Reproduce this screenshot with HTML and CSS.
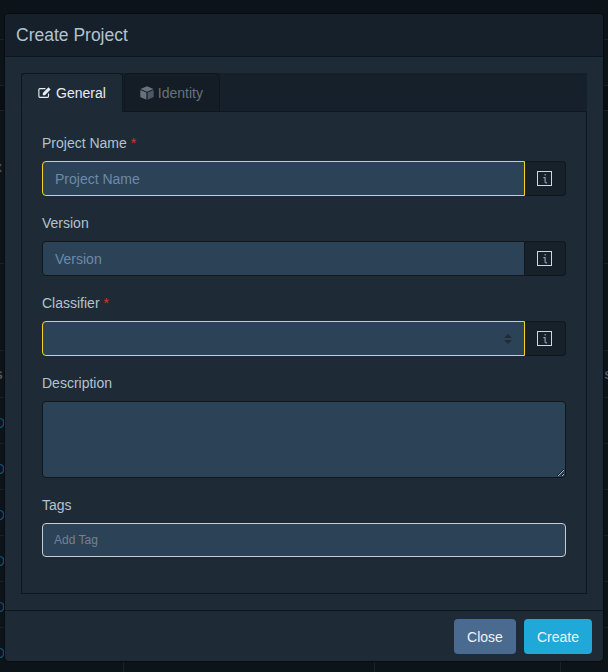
FILE: index.html
```html
<!DOCTYPE html>
<html lang="en">
<head>
<meta charset="utf-8">
<title>Create Project</title>
<link rel="stylesheet" href="styles.css">
</head>
<body>
<div class="page">
  <div class="bg-rows">
    <div class="bg-row r39"></div>
    <div class="bg-row r46"></div>
    <div class="bg-row r25 band"></div>
    <div class="bg-row r153"><span class="bg-x">x</span></div>
    <div class="bg-row r87"></div>
    <div class="bg-row r47"><span class="bg-head">s</span><span class="bg-head">s</span></div>
    <div class="bg-row r46 link-row"><span class="bg-link">D</span></div>
    <div class="bg-row r46 link-row"><span class="bg-link">D</span></div>
    <div class="bg-row r46 link-row"><span class="bg-link">D</span></div>
    <div class="bg-row r46 link-row"><span class="bg-link">D</span></div>
    <div class="bg-row r46 link-row"><span class="bg-link">D</span></div>
    <div class="bg-row cols"><span class="bg-link">D</span><div class="col c123"></div><div class="col c251"></div><div class="col c186"></div></div>
  </div>
  <section class="modal">
    <header class="modal-header"><h1>Create Project</h1></header>
    <div class="modal-body">
      <nav class="tabs">
        <div class="tab active">
          <svg class="tab-icon" viewBox="0 0 16 14"><path d="M8.5 2.5H2.2A1.2 1.2 0 0 0 1 3.7v7.6a1.2 1.2 0 0 0 1.2 1.2h8.6a1.2 1.2 0 0 0 1.2-1.2V8" fill="none" stroke="currentColor" stroke-width="1.3"/><path d="M5.5 7.6 12 1.1l2.4 2.4L7.9 10H5.5z" fill="currentColor"/></svg>
          <span>General</span>
        </div>
        <div class="tab second">
          <svg class="cube-icon" viewBox="0 0 14 14"><path d="M7 .3 13.6 3 7 5.7.4 3z" fill="currentColor"/><path d="M.3 4 6.4 6.6v7.1L.3 11z" fill="currentColor"/><path d="M13.7 4 7.6 6.6v7.1l6.1-2.7z" fill="currentColor" opacity=".7"/></svg>
          <span>Identity</span>
        </div>
      </nav>
      <div class="tab-panel">
        <div class="field">
          <label>Project Name <span class="req">*</span></label>
          <div class="group">
            <input class="control required" placeholder="Project Name">
            <span class="addon"><svg class="info" viewBox="0 0 15 15"><rect x=".5" y=".5" width="14" height="14" fill="none" stroke="currentColor"/><path d="M8.2 3v1.6M6.4 6.6h1.7v4.2q0 1 1 1h1" fill="none" stroke="#8d9cab" stroke-width="1.2"/></svg></span>
          </div>
        </div>
        <div class="field">
          <label>Version</label>
          <div class="group">
            <input class="control" placeholder="Version">
            <span class="addon"><svg class="info" viewBox="0 0 15 15"><rect x=".5" y=".5" width="14" height="14" fill="none" stroke="currentColor"/><path d="M8.2 3v1.6M6.4 6.6h1.7v4.2q0 1 1 1h1" fill="none" stroke="#8d9cab" stroke-width="1.2"/></svg></span>
          </div>
        </div>
        <div class="field">
          <label>Classifier <span class="req">*</span></label>
          <div class="group">
            <div class="control required select">
              <svg class="carets" viewBox="0 0 8 10"><path d="M4 0 8 4H0zM0 6h8L4 10z" fill="currentColor"/></svg>
            </div>
            <span class="addon"><svg class="info" viewBox="0 0 15 15"><rect x=".5" y=".5" width="14" height="14" fill="none" stroke="currentColor"/><path d="M8.2 3v1.6M6.4 6.6h1.7v4.2q0 1 1 1h1" fill="none" stroke="#8d9cab" stroke-width="1.2"/></svg></span>
          </div>
        </div>
        <div class="field">
          <label>Description</label>
          <textarea class="area"></textarea>
        </div>
        <div class="field">
          <label>Tags</label>
          <input class="tags" placeholder="Add Tag">
        </div>
      </div>
    </div>
    <footer class="modal-footer">
      <button class="btn close">Close</button>
      <button class="btn create">Create</button>
    </footer>
  </section>
</div>
</body>
</html>
```
FILE: styles.css
```css
html, body { margin: 0; padding: 0; height: 100%; }
body { background: #0c1319; font-family: "Liberation Sans", Arial, sans-serif; overflow: hidden; }
.page { position: relative; width: 608px; height: 672px; overflow: hidden; }

.bg-row { box-sizing: border-box; border-bottom: 1px solid #1a2229; display: flex; align-items: center; justify-content: space-between; font-size: 14px; text-indent: -5px; }
.r39 { height: 40px; }
.r46 { height: 46px; }
.r47 { height: 47px; }
.r25 { height: 25px; background: #090e13; }
.r153 { height: 153px; align-items: flex-start; padding-top: 48px; }
.r87 { height: 87px; }
.link-row { padding-top: 4px; }
.bg-x { color: #555b61; }
.bg-head { color: #4f555b; font-weight: 700; }
.bg-head + .bg-head { text-indent: 0; margin-right: -4px; }
.bg-link { color: #0e5472; }
.cols { height: 45px; border-bottom: 0; position: relative; align-items: stretch; justify-content: flex-start; }
.cols .bg-link { position: absolute; left: 0; top: 17px; }
.col { box-sizing: border-box; border-right: 1px solid #1a2229; }
.c123 { width: 124px; }
.c251 { width: 251px; }
.c186 { width: 186px; }

.modal {
  position: absolute; left: 5px; top: 14px; width: 598px; height: 647px;
  box-sizing: border-box; display: flex; flex-direction: column;
  background: #1e2b37; border-radius: 4px; box-shadow: 0 0 0 1px #080c10;
}
.modal-header { height: 43px; box-sizing: border-box; background: #15202a; border-bottom: 1px solid #0f161c; padding: 11px 11px 0; border-radius: 4px 4px 0 0; }
.modal-header h1 { margin: 0; font-size: 17.5px; line-height: 21px; font-weight: 400; color: #b4c2d0; }
.modal-body { flex: 1; padding: 16px; display: flex; flex-direction: column; }
.tabs { display: flex; height: 39px; box-sizing: border-box; background: #15202a; border-bottom: 1px solid #0f161c; }
.tab {
  display: flex; align-items: center; gap: 4px; box-sizing: border-box; height: 39px;
  padding: 0 16px; color: #66727e; font-size: 14px;
  border: 1px solid #0f161c; border-radius: 4px 4px 0 0; background: #141d25;
}
.tab.active { background: #1e2b37; color: #e6edf3; border-bottom-color: #1e2b37; margin-right: 1px; }
.tab.second { padding-left: 15px; }
.tab-icon { width: 14px; height: 13px; }
.cube-icon { width: 14px; height: 14px; }
.tab-panel {
  flex: 1; box-sizing: border-box; padding: 21px 20px 0;
  border: 1px solid #0f161c; border-top: 0; display: flex; flex-direction: column; gap: 17px;
}
.field { display: flex; flex-direction: column; gap: 7px; }
.field label { font-size: 14px; line-height: 21px; color: #b4c2d0; height: 21px; }
.req { color: #d9342b; }
.group { display: flex; height: 35px; }
.control {
  flex: 1; min-width: 0; box-sizing: border-box; height: 35px; padding: 0 12px;
  background: #2c4257; border: 1px solid #0f161c;
  border-radius: 4px 0 0 4px; color: #b4c2d0; font: 14px "Liberation Sans", Arial, sans-serif; outline: 0;
}
.control.required { border: 1px solid #f5d328; }
.control::placeholder { color: #6c8aa8; opacity: 1; }
.select { display: flex; align-items: center; justify-content: flex-end; padding-right: 12px; }
.carets { width: 8px; height: 10px; color: #1f2c38; }
.addon {
  width: 41px; box-sizing: border-box; display: flex; align-items: center; justify-content: center;
  padding-right: 2px; background: #17212a; border: 1px solid #0f161c; border-left: 0; border-radius: 0 4px 4px 0; color: #ccd8e3;
}
.info { width: 15px; height: 15px; }
.area {
  display: block; box-sizing: border-box; width: 100%; height: 77px; margin: 0; resize: vertical;
  background: #2c4257; border: 1px solid #0f161c; border-radius: 4px; outline: 0;
}
.tags {
  box-sizing: border-box; width: 100%; height: 34px; padding: 0 11px;
  background: #2c4257; border: 1px solid #c5ccd2; border-radius: 4px; outline: 0;
  font: 12px "Liberation Sans", Arial, sans-serif;
}
.tags::placeholder { color: #738292; opacity: 1; }
.modal-footer {
  height: 51px; box-sizing: border-box; display: flex; justify-content: flex-end; align-items: flex-start;
  gap: 8px; padding: 8px 11px 0; border-top: 1px solid #0f161c;
}
.btn { height: 35px; border: 0; border-radius: 4px; color: #eef4f8; font: 14px "Liberation Sans", Arial, sans-serif; padding: 0; }
.close { width: 62px; background: #4a6a8f; }
.create { width: 68px; background: #20a8d8; }
```
